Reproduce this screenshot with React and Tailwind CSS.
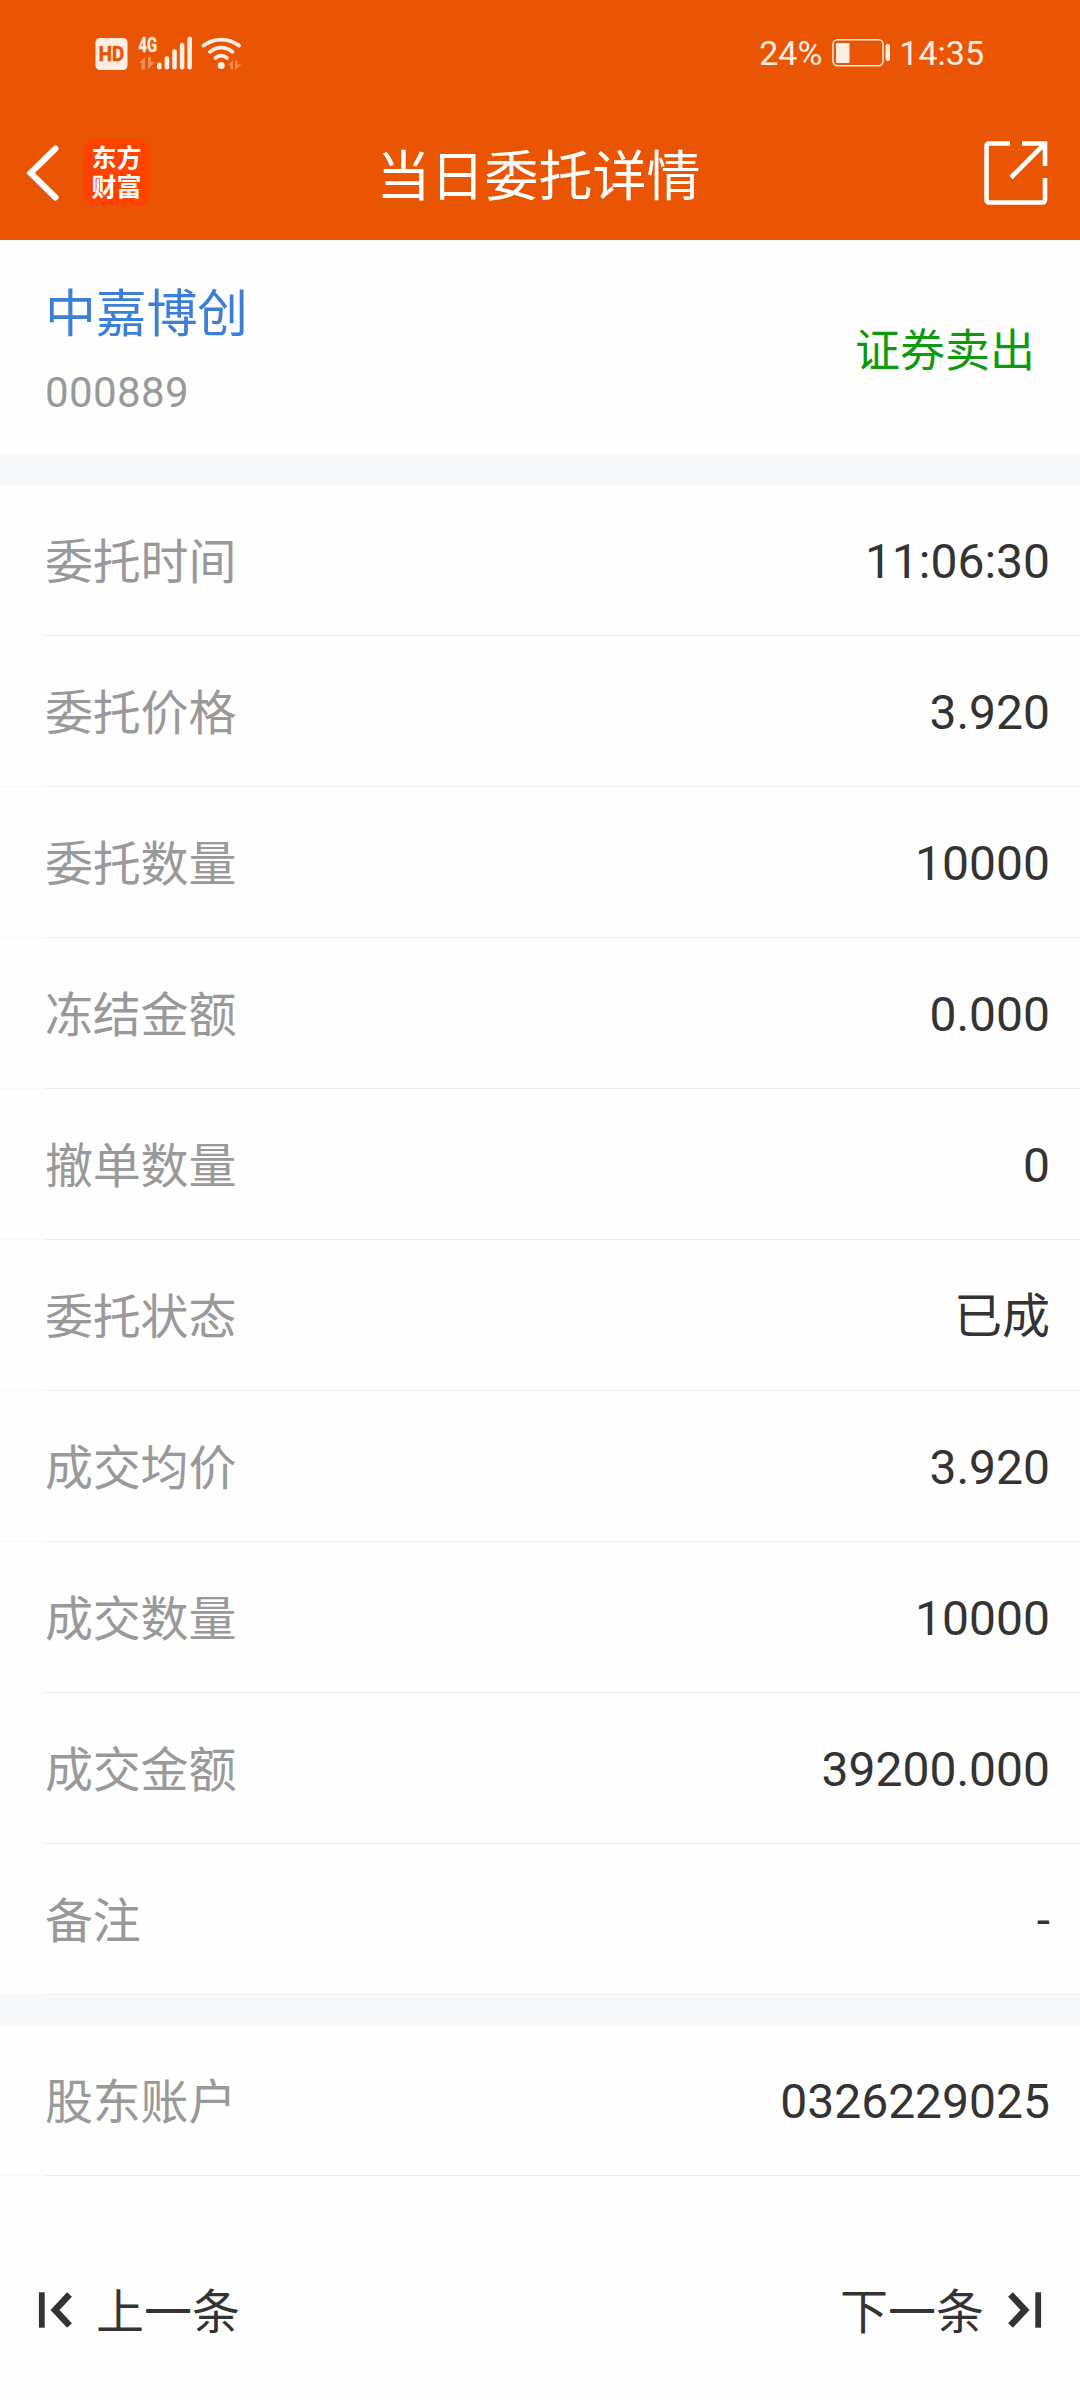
import React from 'react';

const orderRows = [
  { label: '委托时间', value: '11:06:30' },
  { label: '委托价格', value: '3.920' },
  { label: '委托数量', value: '10000' },
  { label: '冻结金额', value: '0.000' },
  { label: '撤单数量', value: '0' },
  { label: '委托状态', value: '已成' },
  { label: '成交均价', value: '3.920' },
  { label: '成交数量', value: '10000' },
  { label: '成交金额', value: '39200.000' },
  { label: '备注', value: '-' },
];

const accountRows = [{ label: '股东账户', value: '0326229025' }];

const SignalIcons = () => (
  <svg width="150" height="40" viewBox="0 0 150 40" className="text-[#fdeee4]" fill="currentColor">
    {/* HD badge */}
    <rect x="0.5" y="5" width="32" height="32" rx="4.5" />
    <text x="16.5" y="28.2" textAnchor="middle" fontFamily="Roboto" fontWeight="700" fontSize="20.5" textLength="25.5" lengthAdjust="spacingAndGlyphs" fill="#ea5504" stroke="#ea5504" strokeWidth="0.6">HD</text>
    {/* 4G and data arrows */}
    <text x="43.5" y="18.5" fontFamily="Roboto" fontWeight="700" fontSize="20.5" textLength="18.5" lengthAdjust="spacingAndGlyphs" stroke="currentColor" strokeWidth="0.4">4G</text>
    <path d="M44 30 l6 -6 v12.5 h-3.5 v-6.5z M53 24 h3 v5 h4 l-7 7.5z" opacity="0.35" />
    {/* signal bars */}
    <rect x="62" y="29.5" width="4.6" height="7" rx="2.3" />
    <rect x="69.6" y="23.2" width="4.6" height="13.3" rx="2" />
    <rect x="77.2" y="16.2" width="4.6" height="20.3" rx="2" />
    <rect x="84.8" y="10" width="4.6" height="26.5" rx="2" />
    <rect x="92.4" y="3.8" width="4.6" height="32.7" rx="2" />
    {/* wifi */}
    <g fill="none" stroke="currentColor" strokeWidth="3.8" strokeLinecap="round">
      <path d="M108.5 12.6 a29 29 0 0 1 35.5 0" />
      <path d="M115 18.8 a17 17 0 0 1 22.5 0" />
      <path d="M120.5 25 a8 8 0 0 1 11.5 0" />
    </g>
    <circle cx="126.2" cy="32.4" r="3.5" />
    <path d="M133 32 l5 -5 v9.5 h-2.5 v-4.5z M140 27.5 h2.5 v4 h4 l-6.5 5.5z" opacity="0.35" />
  </svg>
);

const BatteryIcon = () => (
  <svg width="60" height="30" viewBox="0 0 60 30" className="text-[#fdeee4]">
    <rect x="1" y="1.7" width="50" height="26" rx="4.5" fill="none" stroke="currentColor" strokeWidth="1.5" />
    <rect x="4" y="5" width="13.5" height="20" rx="1" fill="currentColor" />
    <rect x="53.5" y="6" width="4.5" height="17" rx="2" fill="currentColor" />
  </svg>
);

const BackIcon = () => (
  <svg width="34" height="56" viewBox="0 0 34 56" fill="none" stroke="#fff" strokeWidth="6" strokeLinecap="round">
    <path d="M29.5 3.5 L4.500 28 L29.5 52.5" />
  </svg>
);

const ShareIcon = () => (
  <svg width="64" height="64" viewBox="0 0 64 64" fill="none" stroke="#fff" strokeWidth="4.6">
    <path d="M26 2.5 H5 a2.5 2.5 0 0 0 -2.5 2.5 V59 a2.5 2.5 0 0 0 2.5 2.5 H58.5 a2.5 2.5 0 0 0 2.5 -2.5 V37" />
    <path d="M38 2.5 H61 V25 M60 3.5 L27 36.5" />
  </svg>
);

const StepIcon = ({ className }) => (
  <svg width="35" height="36" viewBox="0 0 35 36" className={className} fill="none" stroke="#333">
    <path d="M3.8 0.3 V35.7" strokeWidth="5.8" />
    <path d="M31.5 2.5 L17 18 L31.5 33.5" strokeWidth="6.6" />
  </svg>
);

const Row = ({ label, value }) => (
  <div>
    <div className="flex h-[150px] items-center justify-between bg-[#fefefe] pl-[45px] pr-[30px] text-[48px]">
      <span className="pt-1.5 tracking-[-0.2px] text-[#999]">{label}</span>
      <span className="pt-1 text-[#333]">{value}</span>
    </div>
    <div className="ml-[45px] h-px bg-[#ededed]"></div>
  </div>
);

const App = () => {
  return (
    <div className="flex h-[2400px] w-[1080px] flex-col bg-[#f7f8fa] font-[Roboto,'Noto_Sans_CJK_SC',sans-serif] leading-none">
      <header className="h-[240px] bg-[#ea5504] text-white">
        {/* Status bar */}
        <div className="flex h-[105px] items-center justify-between pl-[95px] pr-[96px] text-[34px] text-[#fdeee4]">
          <SignalIcons />
          <div className="flex items-center">
            <span>24%</span>
            <span className="ml-2.5 mr-[7px]">
              <BatteryIcon />
            </span>
            <span>14:35</span>
          </div>
        </div>
        {/* Title bar */}
        <div className="grid h-[135px] grid-cols-[1fr_auto_1fr] items-center pl-[26px] pr-8">
          <div className="flex items-center gap-[23px]">
            <BackIcon />
            <div className="flex size-[67px] flex-col items-center justify-center rounded-[13px] bg-[#ff4200] text-[25px] font-bold leading-[29px]">
              <span>东方</span>
              <span>财富</span>
            </div>
          </div>
          <h1 className="pl-[3px] pt-2.5 text-[54px]">当日委托详情</h1>
          <div className="flex justify-end">
            <ShareIcon />
          </div>
        </div>
      </header>

      <section className="flex h-[215px] items-center justify-between bg-[#fefefe] px-[45px]">
        <div className="flex flex-col gap-8 pt-2">
          <span className="text-[51px] tracking-[-0.3px] text-[#3d7fd6]">中嘉博创</span>
          <span className="text-[42px] tracking-[0.4px] text-[#999]">000889</span>
        </div>
        <span className="pt-[7px] text-[45px] text-[#0e990e]">证券卖出</span>
      </section>

      <section className="mt-[30px]">
        {orderRows.map((row) => (
          <Row key={row.label} label={row.label} value={row.value} />
        ))}
      </section>

      <section className="mt-[30px]">
        {accountRows.map((row) => (
          <Row key={row.label} label={row.label} value={row.value} />
        ))}
      </section>

      <footer className="flex flex-1 items-center justify-between bg-[#fefefe] px-[38px] pt-11 text-[48px] text-[#333]">
        <div className="flex items-center gap-[23px]">
          <StepIcon />
          <span className="pt-1.5">上一条</span>
        </div>
        <div className="flex items-center gap-[23px]">
          <span className="pt-1.5">下一条</span>
          <StepIcon className="rotate-180" />
        </div>
      </footer>
    </div>
  );
};

export default App;
